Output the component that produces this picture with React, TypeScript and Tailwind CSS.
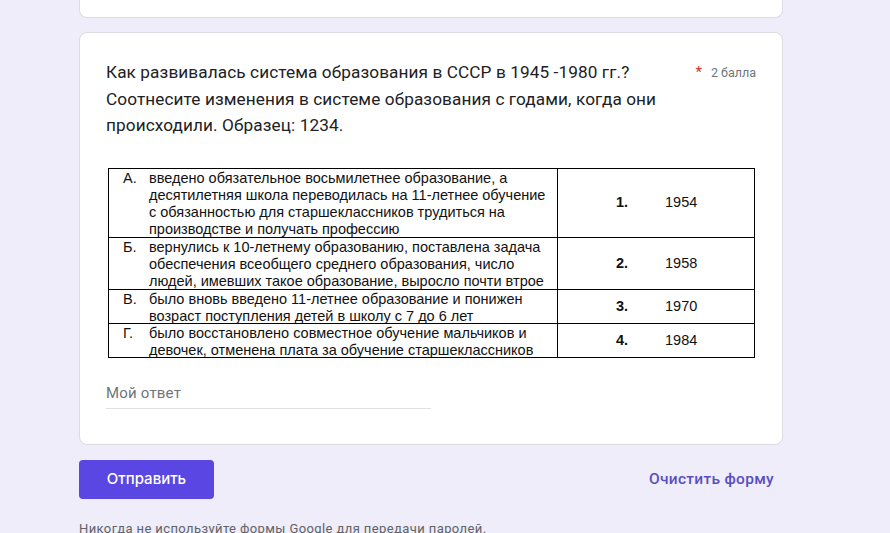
import React from 'react';

const rows = [
  {
    letter: 'А.',
    lines: [
      'введено обязательное восьмилетнее образование, а',
      'десятилетняя школа переводилась на 11-летнее обучение',
      'с обязанностью для старшеклассников трудиться на',
      'производстве и получать профессию',
    ],
    num: '1.',
    year: '1954',
    h: 'h-[68px]',
  },
  {
    letter: 'Б.',
    lines: [
      'вернулись к 10-летнему образованию, поставлена задача',
      'обеспечения всеобщего среднего образования, число',
      'людей, имевших такое образование, выросло почти втрое',
    ],
    num: '2.',
    year: '1958',
    h: 'h-[52px]',
  },
  {
    letter: 'В.',
    lines: [
      'было вновь введено 11-летнее образование и понижен',
      'возраст поступления детей в школу с 7 до 6 лет',
    ],
    num: '3.',
    year: '1970',
    h: 'h-[34px]',
  },
  {
    letter: 'Г.',
    lines: [
      'было восстановлено совместное обучение мальчиков и',
      'девочек, отменена плата за обучение старшеклассников',
    ],
    num: '4.',
    year: '1984',
    h: 'h-[34px]',
  },
];

// Matching table (embedded picture in the form question)
const MatchTable = () => (
  <div className="ml-[2px] w-[647px] border border-black font-['Liberation_Sans',Arial,sans-serif] text-[14.5px] leading-[17px] text-[#111]">
    {rows.map((r, i) => (
      <div key={r.letter} className={`flex ${r.h} ${i > 0 ? 'border-t border-black' : ''}`}>
        <div className="flex w-[448px] overflow-hidden pt-[1px]">
          <div className="w-[40px] shrink-0 pl-[14px]">{r.letter}</div>
          <div className="whitespace-nowrap">
            {r.lines.map((l) => (
              <div key={l}>{l}</div>
            ))}
          </div>
        </div>
        <div className="flex flex-1 items-center border-l border-black">
          <span className="ml-[58px] w-[49px] font-bold">{r.num}</span>
          <span>{r.year}</span>
        </div>
      </div>
    ))}
  </div>
);

export default function App() {
  return (
    <div className="min-h-screen w-full overflow-hidden bg-[#eeedf9] font-['Roboto',Arial,sans-serif]">
      <div className="ml-[79px] w-[704px]">
        {/* previous question card (cut off) */}
        <div className="h-[18px] rounded-b-[8px] border border-t-0 border-[#dadce0] bg-white" />

        {/* question card */}
        <div className="mt-[14px] h-[413px] rounded-[8px] border border-[#dadce0] bg-white px-[26px] pt-[26px]">
          <div className="flex items-start justify-between">
            <div className="w-[570px] text-[17.2px] leading-[26.5px] tracking-[0.1px] text-[#202124]">
              Как развивалась система образования в СССР в 1945 -1980 гг.? Соотнесите изменения в системе образования с годами, когда они происходили. Образец: 1234.
            </div>
            <div className="mt-[2px] flex items-baseline gap-[9px] text-[12.5px] text-[#70757a]">
              <span className="text-[15px] text-[#d93025]">*</span>
              <span>2 балла</span>
            </div>
          </div>

          <div className="mt-[29px]">
            <MatchTable />
          </div>

          <div className="mt-[24px] w-[325px] border-b border-[#e0e0e0] pb-[4px] text-[15px] tracking-[0.2px] text-[#70757a]">
            Мой ответ
          </div>
        </div>

        {/* actions */}
        <div className="mt-[15px] flex items-center justify-between">
          <button className="h-[39px] w-[135px] rounded-[4px] bg-[#5a46e2] font-['Inter',sans-serif] text-[15px] font-medium text-white">
            Отправить
          </button>
          <button className="mr-[9px] mt-[1px] text-[15.5px] font-medium tracking-[0.3px] text-[#5b4fc0]">
            Очистить форму
          </button>
        </div>

        <div className="mt-[20px] text-[13px] tracking-[0.4px] text-[#5f6368]">
          Никогда не используйте формы Google для передачи паролей.
        </div>
      </div>
    </div>
  );
}
